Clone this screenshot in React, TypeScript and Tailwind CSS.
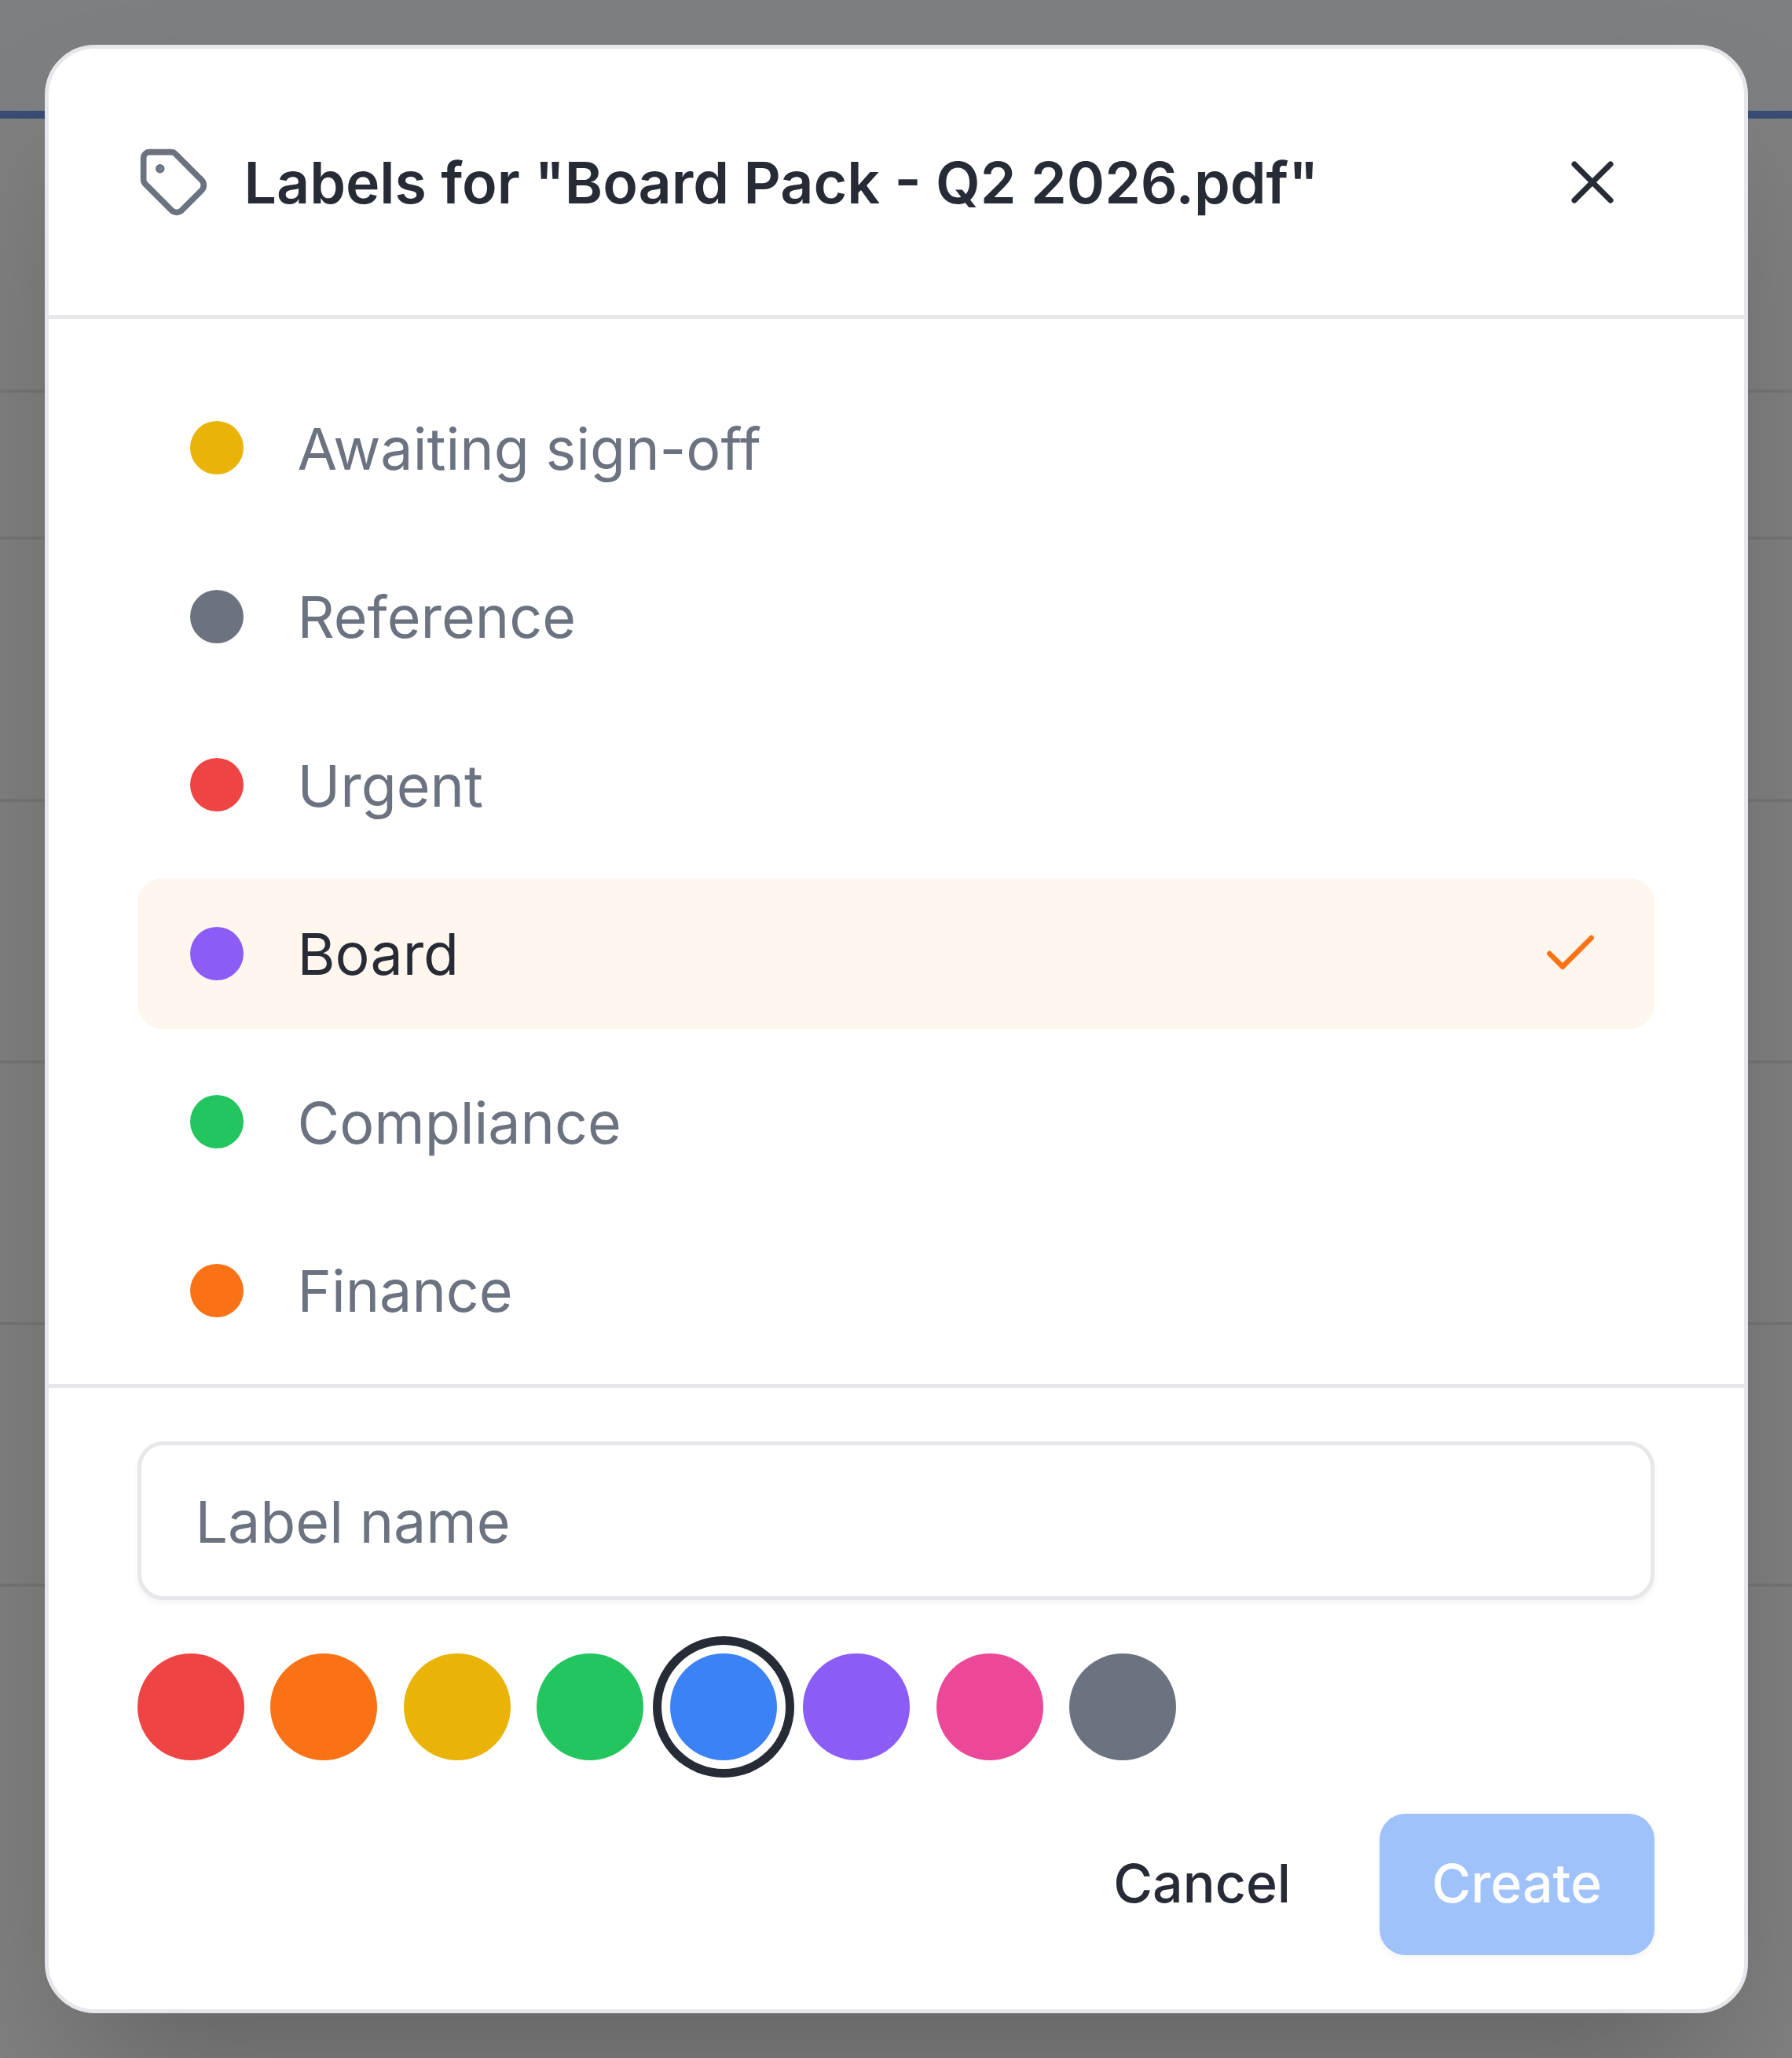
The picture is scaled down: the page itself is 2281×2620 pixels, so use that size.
import { Tag, X, Check } from "lucide-react";

const labels = [
  { name: "Awaiting sign-off", dot: "bg-[#eab308]" },
  { name: "Reference", dot: "bg-[#6b7280]" },
  { name: "Urgent", dot: "bg-[#ef4444]" },
  { name: "Board", dot: "bg-[#8b5cf6]", selected: true },
  { name: "Compliance", dot: "bg-[#22c55e]" },
  { name: "Finance", dot: "bg-[#f97316]" },
];

const swatches = [
  { c: "bg-[#ef4444]" },
  { c: "bg-[#f97316]" },
  { c: "bg-[#eab308]" },
  { c: "bg-[#22c55e]" },
  { c: "bg-[#3b82f6] shadow-[0_0_0_11px_#ffffff,0_0_0_22px_#262b36]" },
  { c: "bg-[#8b5cf6]" },
  { c: "bg-[#ec4899]" },
  { c: "bg-[#6b7280]" },
];

const bgRows = ["h-[349px]", "h-[187px]", "h-[334px]", "h-[333px]", "h-[333px]", "h-[333px]"];

export default function App() {
  return (
    <div className="relative h-[2620px] w-[2281px] overflow-hidden bg-[#808080] font-['Inter',sans-serif]">
      <div className="h-[151px] border-b-[10px] border-[#394e77] bg-[#7e7f81]" />
      {bgRows.map((h, i) => (
        <div key={i} className={`${h} border-b-[4px] border-[#767676]`} />
      ))}

      <div className="absolute inset-0 flex items-center justify-center">
        <div className="flex h-[2506px] w-[2168px] flex-col rounded-[64px] border-[5px] border-[#e5e7eb] bg-white shadow-[0_100px_200px_-48px_rgba(0,0,0,0.25)]">
          <div className="flex h-[344px] shrink-0 items-center justify-between border-b-[5px] border-[#e5e7eb] px-[113px]">
            <div className="flex items-center gap-[44px]">
              <Tag size={92} strokeWidth={2} className="text-[#6b7280]" />
              <h2 className="pt-[2px] text-[73.4px] leading-[100px] font-semibold text-[#262b36]">
                Labels for "Board Pack - Q2 2026.pdf"
              </h2>
            </div>
            <button className="p-[34px] text-[#262b36]">
              <X size={92} strokeWidth={1.85} />
            </button>
          </div>

          <div className="flex h-[1361px] shrink-0 flex-col gap-[22.6px] border-b-[5px] border-[#e5e7eb] pt-[68px] pr-[114px] pl-[113px]">
            {labels.map((l) => (
              <div
                key={l.name}
                className={`flex h-[192px] shrink-0 items-center gap-[69px] rounded-[32px] px-[67px] ${
                  l.selected ? "bg-[#fff7ed] text-[#262b36]" : "text-[#6b7280]"
                }`}
              >
                <span className={`h-[68px] w-[68px] shrink-0 rounded-full ${l.dot}`} />
                <span className="flex-1 pt-[3px] text-[73.5px] leading-[100px]">{l.name}</span>
                {l.selected && <Check size={80} strokeWidth={2} className="text-[#f97316]" />}
              </div>
            ))}
          </div>

          <div className="flex flex-col gap-[68px] pt-[68px] pr-[114px] pl-[113px]">
            <input
              placeholder="Label name"
              className="h-[202px] w-full rounded-[33px] border-[5px] border-[#e5e7eb] bg-white pt-[3px] pr-[67px] pl-[69px] text-[73.5px] shadow-[0_4px_8px_rgba(0,0,0,0.05)] outline-none placeholder:text-[#6b7280]"
            />
            <div className="flex gap-[33.5px]">
              {swatches.map((s, i) => (
                <span key={i} className={`h-[136px] w-[136px] rounded-full ${s.c}`} />
              ))}
            </div>
            <div className="flex items-center justify-end gap-[46px]">
              <button className="h-[180px] px-[67px] pb-[5px] text-[68px] font-medium text-[#262b36]">Cancel</button>
              <button className="h-[180px] rounded-[33px] bg-[#9fc2fb] px-[66.5px] pb-[5px] text-[68px] font-medium text-white shadow-[0_4px_8px_rgba(0,0,0,0.05)]">
                Create
              </button>
            </div>
          </div>
        </div>
      </div>
    </div>
  );
}
